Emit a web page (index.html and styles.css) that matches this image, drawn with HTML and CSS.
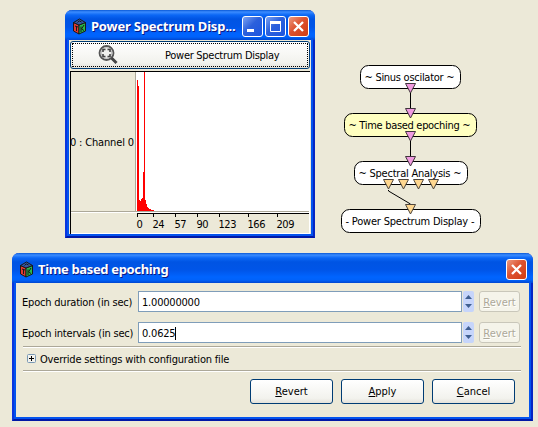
FILE: index.html
```html
<!DOCTYPE html>
<html lang="en">
<head>
<meta charset="utf-8">
<title>Time based epoching</title>
<link rel="stylesheet" href="styles.css">
</head>
<body>
<svg width="0" height="0" class="defs">
  <defs>
    <symbol id="cube" viewBox="0 0 15 17">
      <path d="M1.500 4.500 7 7v9L1.500 13z" fill="#e13a32" stroke="#181818"/>
      <path d="M13.500 4.500 7 7v9l6.500-3z" fill="#28b94a" stroke="#181818"/>
      <path d="M7.500 1 13.500 4.500 7 7 1.500 4.500z" fill="#3458a4" stroke="#181818"/>
      <path d="M5.500 4.500Q7 1.500 9.500 4M3 8l3 1M4.500 8.500V13M9 8.500V14M12 7 9.500 11l2.500 1.500" fill="none" stroke="#181818" stroke-width="1"/>
    </symbol>
    <symbol id="pink" viewBox="0 0 11 11"><path d="M.5.500h10L5.500 10z" fill="#f09ae0" stroke="#40353c"/></symbol>
    <symbol id="gold" viewBox="0 0 11 11"><path d="M.5.500h10L5.500 10z" fill="#ffd78f" stroke="#4c453c"/></symbol>
    <symbol id="close" viewBox="0 0 19 19"><path d="M5 5l9 9M14 5l-9 9" stroke="#fff" stroke-width="2.300"/></symbol>
  </defs>
</svg>
<main class="desktop">
  <section class="window spectrum">
    <header class="titlebar">
      <svg class="app" width="15" height="17"><use href="#cube"/></svg>
      <h1 class="t-spectrum">Power Spectrum Disp...</h1>
      <div class="controls">
        <span class="ctl"><svg width="19" height="19"><path d="M4 13.500h7" stroke="#fff" stroke-width="3"/></svg></span>
        <span class="ctl"><svg width="19" height="19"><path d="M4.500 5v9.500h10V5" fill="none" stroke="#fff"/><path d="M4 5.500h11" stroke="#fff" stroke-width="3"/></svg></span>
        <span class="ctl red"><svg width="19" height="19"><use href="#close"/></svg></span>
      </div>
    </header>
    <div class="client">
      <button class="tool">
        <svg width="20" height="20" viewBox="0 0 20 20"><circle cx="8.500" cy="8" r="7" fill="#f1f1ee" stroke="#555" stroke-width="1.800"/><circle cx="8.500" cy="8" r="5.300" fill="none" stroke="#bbb"/><path d="M5 7V4.500h2.500M9.500 4.500H12V7M12 9v2.500H9.500M7.500 11.500H5V9" fill="none" stroke="#444" stroke-width="1.600"/><path d="M13.500 13l5 5" stroke="#444" stroke-width="3"/></svg>
        <span>Power Spectrum Display</span>
      </button>
      <svg class="chart" width="240" height="163" viewBox="70 71 240 163">
        <rect x="136" y="72" width="173" height="140" fill="#fff"/>
        <path d="M70 71.500h240M70.500 71v163" stroke="#000"/>
        <path d="M135.500 72v140M71 211.500h238" stroke="#aca899"/>
        <path d="M71 212.500h238M309.500 72v161M71 233.500h239" stroke="#fff"/>
        <path d="M137 211V80h1v6h1v114h1v1h1v-2h1v-1h1v-26h1V72h1v128h1v4h1v3h1v1h1v1h2v1h3v1z" fill="#f00"/>
        <path d="M137 213.500h172M137.500 213v4M153.500 213v4M175.500 213v4M197.500 213v4M219.500 213v4M248.500 213v4M277.500 213v4" stroke="#000"/>
        <g class="label">
          <text x="70" y="146" textLength="64">0 : Channel 0</text>
          <text x="136.500" y="228">0</text>
          <text x="152.500" y="228" textLength="12">24</text>
          <text x="174.500" y="228" textLength="12">57</text>
          <text x="196.500" y="228" textLength="12">90</text>
          <text x="218.500" y="228" textLength="18">123</text>
          <text x="247.500" y="228" textLength="18">166</text>
          <text x="276.500" y="228" textLength="18">209</text>
        </g>
      </svg>
    </div>
  </section>

  <svg class="graph" width="142" height="172" viewBox="340 64 142 172">
    <g stroke="#000" fill="#fff">
      <rect x="360.500" y="65.500" width="100" height="23" rx="8"/>
      <rect x="344.500" y="113.500" width="132" height="23" rx="8" fill="#ffffc0"/>
      <rect x="354.500" y="161.500" width="113" height="23" rx="8"/>
      <rect x="341.500" y="209.500" width="139" height="23" rx="8"/>
      <path d="M410.500 93v16M410.500 141v16M388.500 190v1l22 13" fill="none"/>
    </g>
    <use href="#pink" x="405" y="83" width="11" height="11"/>
    <use href="#pink" x="405" y="108" width="11" height="11"/>
    <use href="#pink" x="405" y="131" width="11" height="11"/>
    <use href="#pink" x="405" y="156" width="11" height="11"/>
    <use href="#gold" x="383" y="179" width="11" height="11"/>
    <use href="#gold" x="398" y="179" width="11" height="11"/>
    <use href="#gold" x="413" y="179" width="11" height="11"/>
    <use href="#gold" x="428" y="179" width="11" height="11"/>
    <use href="#gold" x="405" y="204" width="11" height="11"/>
    <g class="label">
      <text x="364.500" y="81" textLength="90">~ Sinus oscilator ~</text>
      <text x="348.500" y="129" textLength="122">~ Time based epoching ~</text>
      <text x="358.500" y="177" textLength="103">~ Spectral Analysis ~</text>
      <text x="345.500" y="225" textLength="129">- Power Spectrum Display -</text>
    </g>
  </svg>

  <section class="window dialog">
    <header class="titlebar">
      <svg class="app" width="15" height="17"><use href="#cube"/></svg>
      <h1 class="t-dialog">Time based epoching</h1>
      <div class="controls"><span class="ctl red"><svg width="19" height="19"><use href="#close"/></svg></span></div>
    </header>
    <div class="form">
      <div class="row">
        <label>Epoch duration (in sec)</label>
        <div class="field">1.00000000</div>
        <svg class="spin" width="11" height="21"><path d="M2 8l3.500-4L9 8zM2 13h7l-3.500 4z" fill="#3f5f91"/></svg>
        <button class="mini"><u>R</u>evert</button>
      </div>
      <div class="row">
        <label>Epoch intervals (in sec)</label>
        <div class="field">0.0625<i class="caret"></i></div>
        <svg class="spin" width="11" height="21"><path d="M2 8l3.500-4L9 8zM2 13h7l-3.500 4z" fill="#3f5f91"/></svg>
        <button class="mini"><u>R</u>evert</button>
      </div>
      <div class="expander">
        <svg width="9" height="9"><rect x=".5" y=".5" width="8" height="8" rx="1" fill="#f3f2ec" stroke="#7898b5"/><path d="M2 4.500h5M4.500 2v5" stroke="#000"/></svg>
        <span>Override settings with configuration file</span>
      </div>
      <div class="actions">
        <button class="action"><u>R</u>evert</button>
        <button class="action"><u>A</u>pply</button>
        <button class="action"><u>C</u>ancel</button>
      </div>
    </div>
  </section>
</main>
</body>
</html>
```
FILE: styles.css
```css
* { box-sizing: border-box; }
body {
  margin: 0;
  width: 538px;
  height: 427px;
  overflow: hidden;
  background: #ece9d8;
  color: #000;
  font: 11px "DejaVu Sans Condensed", "DejaVu Sans", sans-serif;
  font-stretch: condensed;
}
.defs { position: absolute; }
.desktop { position: relative; width: 538px; height: 427px; }
.window {
  position: absolute;
  display: flex;
  flex-direction: column;
  background: #ece9d8;
  border-radius: 7px 7px 0 0;
  border: solid;
  border-width: 0 4px 4px;
  border-color: #0a35df #0526c4 #0017a5 #0a35df;
}
.spectrum { left: 65px; top: 10px; width: 250px; height: 228px; }
.dialog { left: 12px; top: 253px; width: 521px; height: 168px; }
.graph { position: absolute; left: 340px; top: 64px; }
.window::after {
  content: "";
  position: absolute;
  inset: 29px -2px -2px;
  border: 2px solid #0353ee;
  border-top: 0;
  pointer-events: none;
}
.titlebar {
  display: flex;
  align-items: center;
  flex: none;
  height: 30px;
  margin: 0 -4px;
  padding: 3px 6px 0 7px;
  border-radius: 7px 7px 0 0;
  background: linear-gradient(#0958d6 0, #3b8cff 2px, #0b67f5 5px, #0054e3 9px, #0055e8 17px, #0064ff 24px, #0062fa 27px, #0046d0 30px);
}
.app { flex: none; margin-right: 4px; }
h1 {
  margin: 0;
  padding-bottom: 2px;
  color: #fff;
  font: bold 13px/18px "Noto Sans", "Open Sans", sans-serif;
  text-shadow: 1px 1px #0a1883;
  white-space: nowrap;
}
.t-spectrum { letter-spacing: -.2px; }
.t-dialog { letter-spacing: -.35px; }
.controls { display: flex; gap: 2px; margin-left: auto; }
.ctl {
  width: 21px;
  height: 21px;
  border: 1px solid #fff;
  border-radius: 3px;
  background: linear-gradient(135deg, #7ba2f2, #2b60dc 45%, #1c55e0);
}
.ctl svg { display: block; }
.red { background: linear-gradient(135deg, #ec9a80, #dd5230 45%, #d13c12); }
.client { padding: 1px 0 0 1px; }
.tool {
  position: relative;
  display: flex;
  align-items: center;
  width: 240px;
  height: 28px;
  padding: 0 0 0 27px;
  border: 1px solid #003c74;
  border-radius: 3px;
  background: linear-gradient(#fff, #f2f2ed 80%, #e4e2da);
  color: #000;
  font: inherit;
}
.tool::after { content: ""; position: absolute; inset: 1px; border: 1px dotted #000; }
.tool span { margin-left: 47px; white-space: nowrap; letter-spacing: -.28px; }
.chart { display: block; margin-top: 2px; }
.label { font-size: 11px; }
.form { padding: 8px 8px 0 6px; }
.row { display: flex; align-items: center; height: 21px; margin-bottom: 10px; padding-right: 1px; }
.row label { width: 116px; flex: none; padding-top: 1px; white-space: nowrap; letter-spacing: -.2px; }
.field {
  display: flex;
  align-items: center;
  width: 324px;
  height: 21px;
  padding: 1px 0 0 3px;
  border: 1px solid #7f9db9;
  background: #fff;
  letter-spacing: -.2px;
}
.caret { width: 1px; height: 13px; background: #000; }
.spin { margin-left: 1px; background: #c6d5fb; border-radius: 2px; }
.mini {
  width: 41px;
  height: 21px;
  margin-left: 5px;
  padding: 1px 0 0;
  border: 1px solid #c9c7ba;
  border-radius: 3px;
  background: #f5f4ea;
  color: #aca899;
  font: inherit;
  text-shadow: 1px 1px #fff;
}
.expander {
  display: flex;
  align-items: center;
  gap: 5px;
  height: 25px;
  margin: -7px 0 0 1px;
  padding-left: 4px;
  border-top: 1px solid #aca899;
  border-bottom: 1px solid #aca899;
  box-shadow: inset 0 1px #fff, 0 1px #fff;
}
.expander span { margin-left: -1px; padding-top: 1px; letter-spacing: -.18px; }
.actions { display: flex; justify-content: flex-end; gap: 8px; margin-top: 8px; padding-right: 6px; }
.action {
  width: 83px;
  height: 25px;
  padding: 0;
  border: 1px solid #003c74;
  border-radius: 3px;
  background: linear-gradient(#fff, #f2f2ed 80%, #e4e2da);
  color: #000;
  font: inherit;
}
u { text-underline-offset: 1px; }
```
